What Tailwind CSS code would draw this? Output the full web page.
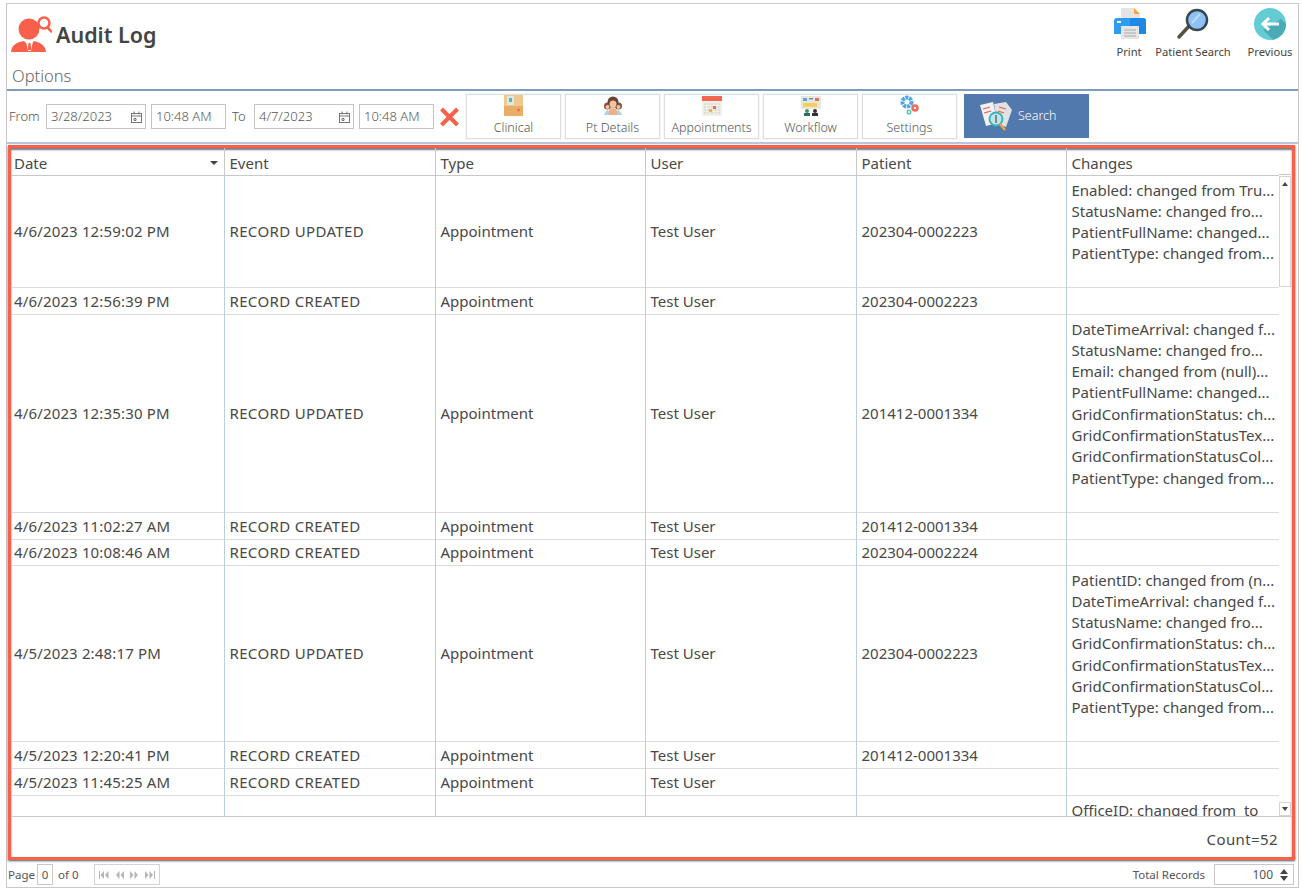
<!DOCTYPE html>
<html lang="en">
  <head>
    <meta charset="UTF-8" />
    <script src="https://cdn.jsdelivr.net/npm/@tailwindcss/browser@4"></script>
    <title>Audit Log</title>
  </head>
  <body class="bg-white font-['Noto_Sans',sans-serif] text-[#484848] overflow-hidden">
    <div class="h-[891px] w-[1302px] pt-[3px] pr-[3px] pb-[3px] pl-[6px]">
      <div class="h-[885px] border border-[#c8c8c8] flex flex-col">
        <!-- HEADER -->
        <div class="h-[85px] shrink-0 flex justify-between">
          <div class="pl-[4px] pt-[11px]">
            <div class="flex items-center gap-[4px] h-[38px]">
              <svg class="w-[41px] h-[37px]" viewBox="0 0 41 37">
                <path d="M0 36c1-7 4-9 13-11l3 3 2-1 2 1 3-3c7 2 11 4 12 11z" fill="#f9604c"/>
                <path d="M15 25h7l-2 10h-3z" fill="#fff"/><path d="M17.500 27h2l.8 7h-3.600z" fill="#f9604c"/>
                <circle cx="18" cy="13" r="10.500" fill="#f9604c"/>
                <circle cx="33" cy="7" r="5.500" fill="#fff" stroke="#f9604c" stroke-width="2.500"/>
                <path d="M36.500 11.500l4 4" stroke="#f9604c" stroke-width="2.500" stroke-linecap="round"/>
              </svg>
              <h1 class="text-[21.500px] leading-none font-semibold text-[#444] mt-[2px]">Audit Log</h1>
            </div>
            <p class="text-[16.500px] leading-none font-light text-[#666] mt-[15px] ml-px">Options</p>
          </div>
          <div class="flex text-[11.200px] text-[#444]">
            <div class="flex flex-col items-center w-[32px] mr-[7px] pt-[4px]">
              <svg class="w-[34px] h-[31px] shrink-0 ml-px" viewBox="0 0 34 31">
                <path d="M8 0h13l6 6v9H8z" fill="#e4e4e4"/><path d="M21 0l6 6h-6z" fill="#f9a33a"/>
                <path d="M1 13q0-3 3-3h26q3 0 3 3v13H1z" fill="#2f9cf0"/><path d="M17 10h13q3 0 3 3v13H17z" fill="#1e88e5"/>
                <rect x="4" y="13" width="4" height="2" fill="#fff"/>
                <rect x="8" y="18" width="18" height="13" fill="#e6e6e6"/>
                <path d="M11 22h12M11 25h12M11 28h12" stroke="#aaa" stroke-width="1.200"/>
              </svg>
              <span class="mt-[5px] whitespace-nowrap leading-[16px]">Print</span>
            </div>
            <div class="flex flex-col items-center w-[82px] mr-[14px] pt-[4px]">
              <svg class="w-[34px] h-[32px] shrink-0" viewBox="0 0 34 32">
                <path d="M3 29l11-12" stroke="#5a5040" stroke-width="3.500" stroke-linecap="round"/>
                <circle cx="21" cy="12" r="10" fill="#8fc1f7" stroke="#37474f" stroke-width="2.500"/>
                <path d="M16 15l8-9" stroke="#bcdcfb" stroke-width="2"/>
              </svg>
              <span class="mt-[4px] whitespace-nowrap leading-[16px]">Patient Search</span>
            </div>
            <div class="flex flex-col items-center w-[44px] mr-[6px] pt-[4px]">
              <svg class="w-[32px] h-[32px] shrink-0" viewBox="0 0 32 32">
                <circle cx="16" cy="16" r="16" fill="#63cdd3"/>
                <path d="M9 22l10 9.700a16 16 0 0 0 13-15.700l-5-5z" fill="#4bacb8"/>
                <path d="M25 16H9m6-6l-6 6 6 6" fill="none" stroke="#fff" stroke-width="3"/>
              </svg>
              <span class="mt-[4px] whitespace-nowrap leading-[16px]">Previous</span>
            </div>
          </div>
        </div>
        <!-- TOOLBAR -->
        <div class="h-[55px] shrink-0 border-t-2 border-t-[#7f9cc0] border-b-2 border-b-[#b5c7dc] flex items-start pt-[3px] text-[13px] text-[#555]">
          <div class="flex items-center h-[25px] mt-[10px] ml-[2px] font-light">
            <span class="w-[37px] pt-px">From</span>
            <div class="w-[100px] h-[25px] border border-[#c4c4c4] flex items-center justify-between pl-[4px] pr-[2px] pt-px">3/28/2023
              <svg class="w-[13px] h-[13px]" viewBox="0 0 13 13" fill="none" stroke="#777"><rect x="1.500" y="2.500" width="10" height="9"/><path d="M1.500 5h10M4 .5v3M9 .5v3M4 7.500h2v2H4z"/></svg>
            </div>
            <div class="w-[75px] h-[25px] border border-[#c4c4c4] flex items-center pl-[4px] ml-[5px] pt-px">10:48 AM</div>
            <span class="w-[28px] pl-[6px] pt-px">To</span>
            <div class="w-[100px] h-[25px] border border-[#c4c4c4] flex items-center justify-between pl-[4px] pr-[2px] pt-px">4/7/2023
              <svg class="w-[13px] h-[13px]" viewBox="0 0 13 13" fill="none" stroke="#777"><rect x="1.500" y="2.500" width="10" height="9"/><path d="M1.500 5h10M4 .5v3M9 .5v3M4 7.500h2v2H4z"/></svg>
            </div>
            <div class="w-[75px] h-[25px] border border-[#c4c4c4] flex items-center pl-[4px] ml-[5px] pt-px">10:48 AM</div>
            <svg class="w-[21px] h-[20px] ml-[5px]" viewBox="0 0 21 20"><path d="M2.500 2l16 16M18.500 2l-16 16" stroke="#f9604c" stroke-width="4"/></svg>
          </div>
          <div class="flex gap-[4px] ml-[6px] text-[12.500px] font-light">
            <div class="w-[95px] h-[45px] border border-[#ddd] shadow-[0_0_1px_#ccc] flex flex-col items-center">
              <svg class="w-[19px] h-[21px] shrink-0" viewBox="0 0 19 21"><rect width="19" height="21" fill="#eec88e"/><rect y="11" width="19" height="10" fill="#e9ae65"/><rect x="3" y="1" width="7" height="9" fill="#d7ece6"/><rect x="5" y="3" width="3" height="4" fill="#5fb6a4"/><path d="M13 15h3M14.500 13.500v3" stroke="#f9604c" stroke-width="1.200"/></svg>
              <span class="leading-[17px] mt-[3px]">Clinical</span>
            </div>
            <div class="w-[95px] h-[45px] border border-[#ddd] shadow-[0_0_1px_#ccc] flex flex-col items-center">
              <svg class="w-[20px] h-[21px] shrink-0" viewBox="0 0 20 21"><circle cx="4.500" cy="11" r="3.500" fill="#7d5040"/><circle cx="15.500" cy="11" r="3.500" fill="#7d5040"/><circle cx="10" cy="7" r="5.500" fill="#6d4434"/><circle cx="10" cy="9" r="3.500" fill="#f3c39d"/><circle cx="4.500" cy="12" r="2" fill="#f3c39d"/><circle cx="15.500" cy="12" r="2" fill="#f3c39d"/><path d="M4 20q1-6 6-7 5 1 6 7z" fill="#e9b08a"/><path d="M1 20q1-4 4-5l1 5zM19 20q-1-4-4-5l-1 5z" fill="#a9d6e5"/></svg>
              <span class="leading-[17px] mt-[3px]">Pt Details</span>
            </div>
            <div class="w-[95px] h-[45px] border border-[#ddd] shadow-[0_0_1px_#ccc] flex flex-col items-center">
              <svg class="w-[20px] h-[21px] shrink-0" viewBox="0 0 20 21"><rect y="1" width="20" height="20" fill="#f2efe8"/><rect y="1" width="20" height="5" fill="#f0684f"/><path d="M2 9h16M2 12h16M2 15h16M2 18h16" stroke="#d9d6cf" stroke-width="1.500" stroke-dasharray="2 1.500"/><rect x="11" y="11" width="3" height="3" fill="#f0684f"/><rect x="7" y="14" width="3" height="3" fill="#f5b04c"/></svg>
              <span class="leading-[17px] mt-[3px]">Appointments</span>
            </div>
            <div class="w-[95px] h-[45px] border border-[#ddd] shadow-[0_0_1px_#ccc] flex flex-col items-center">
              <svg class="w-[20px] h-[21px] shrink-0" viewBox="0 0 20 21"><rect y="1" width="20" height="13" fill="#e8e6e2"/><rect x="2" y="3" width="4" height="3" fill="#5aa9d6"/><rect x="8" y="3" width="4" height="1.500" fill="#888"/><rect x="14" y="3" width="4" height="3" fill="#e8705a"/><rect x="2" y="8" width="14" height="4" fill="#f5cf5a"/><circle cx="6" cy="16" r="2" fill="#3f8f7a"/><circle cx="14" cy="16" r="2" fill="#333"/><rect x="3" y="18" width="6" height="3" fill="#2d6d60"/><rect x="11" y="18" width="6" height="3" fill="#333"/></svg>
              <span class="leading-[17px] mt-[3px]">Workflow</span>
            </div>
            <div class="w-[95px] h-[45px] border border-[#ddd] shadow-[0_0_1px_#ccc] flex flex-col items-center">
              <svg class="w-[20px] h-[21px] shrink-0" viewBox="0 0 20 21" fill="none"><circle cx="7" cy="7" r="4.500" stroke="#4aa6e8" stroke-width="4" stroke-dasharray="3 .8"/><circle cx="15" cy="13" r="2.500" stroke="#ef6a5a" stroke-width="2.500"/><circle cx="9" cy="17" r="1.800" stroke="#5cc4bd" stroke-width="1.500"/></svg>
              <span class="leading-[17px] mt-[3px]">Settings</span>
            </div>
            <div class="w-[125px] h-[44px] bg-[#5179ae] ml-[3px] flex items-center text-white pl-[15px] gap-[5px]">
              <svg class="w-[34px] h-[32px] shrink-0" viewBox="0 0 34 32"><path d="M1 5l13-3 5 21-12 3z" fill="#f2f2f2"/><path d="M15 4l12-2 6 8-6 17-8-3z" fill="#e2e2e2"/><path d="M4 9l7-2M5 13l7-2M20 7l7 2M19 11l6 2" stroke="#e8604c" stroke-width="1.200"/><circle cx="17" cy="19" r="6.500" fill="#bfe6ea" stroke="#3fb3b8" stroke-width="2"/><path d="M21 24l5 6" stroke="#f5a03c" stroke-width="2.500"/><path d="M17 15v8" stroke="#333"/></svg>
              <span>Search</span>
            </div>
          </div>
        </div>
        <!-- GRID -->
        <div class="h-[715px] shrink-0 mt-px ml-px mr-[3px] border-[3px] border-[#f9604c] shadow-[0_1px_2px_#555,inset_0_2px_2px_#777] flex flex-col text-[15px] overflow-hidden">
          <div class="flex flex-1 min-h-0">
            <div class="w-[1268px] shrink-0 overflow-hidden h-[668px]">
              <table class="w-[1268px] table-fixed border-collapse">
                <colgroup><col class="w-[213px]"/><col class="w-[211px]"/><col class="w-[210px]"/><col class="w-[211px]"/><col class="w-[210px]"/><col class="w-[213px]"/></colgroup>
                <thead>
                  <tr class="h-[27px] text-left border-b border-[#c8c8c8]">
                    <th class="font-normal pl-[3px] pt-[4px] leading-[20px] border-r border-[#c8c8c8]"><div class="flex items-center justify-between pr-[6px]">Date<span class="w-0 h-0 border-x-4 border-x-transparent border-t-4 border-t-[#444]"></span></div></th>
                    <th class="font-normal pl-[5px] pt-[4px] leading-[20px] border-r border-[#c8c8c8]">Event</th>
                    <th class="font-normal pl-[5px] pt-[4px] leading-[20px] border-r border-[#c8c8c8]">Type</th>
                    <th class="font-normal pl-[5px] pt-[4px] leading-[20px] border-r border-[#c8c8c8]">User</th>
                    <th class="font-normal pl-[5px] pt-[4px] leading-[20px] border-r border-[#c8c8c8]">Patient</th>
                    <th class="font-normal pl-[5px] pt-[4px] leading-[20px] border-r border-[#c8c8c8]">Changes</th>
                  </tr>
                </thead>
                <tbody id="log-body"></tbody>
              </table>
            </div>
            <!-- scrollbar -->
            <div class="w-[12px] shrink-0 flex flex-col">
              <div class="h-[27px] border-b border-[#c8c8c8]"></div>
              <div class="h-[111px] mt-px border border-[#d4d4d4] flex justify-center pt-[5px]">
                <span class="w-0 h-0 border-x-[3.500px] border-x-transparent border-b-4 border-b-[#444]"></span>
              </div>
              <div class="flex-1"></div>
              <div class="h-[14px] border border-[#d4d4d4] flex justify-center items-center">
                <span class="w-0 h-0 border-x-[3.500px] border-x-transparent border-t-4 border-t-[#444]"></span>
              </div>
            </div>
          </div>
          <div class="h-[41px] shrink-0 border-t border-[#c8c8c8] text-right pr-[14px] pt-[12px] leading-[20px] tracking-[0.4px]">Count=52</div>
        </div>
        <!-- FOOTER -->
        <div class="flex-1 mt-[2px] flex items-center justify-between text-[11.500px] text-[#555]">
          <div class="flex items-center h-full">
            <span class="ml-px w-[29px]">Page</span>
            <div class="w-[16px] h-[21px] border border-[#c8c8c8] flex items-center justify-center">0</div>
            <span class="ml-[5px] w-[36px]">of 0</span>
            <div class="w-[66px] h-[21px] border border-[#d4d4d4] flex items-center justify-between px-[4px]">
              <svg class="w-[10px] h-[8px]" viewBox="0 0 10 8" fill="#b5b5b5"><path d="M0 0h1v8H0zM5 0v8L1.500 4zM9.500 0v8L6 4z"/></svg>
              <svg class="w-[9px] h-[8px]" viewBox="0 0 9 8" fill="#b5b5b5"><path d="M4.500 0v8L1 4zM9 0v8L5.500 4z"/></svg>
              <svg class="w-[9px] h-[8px]" viewBox="0 0 9 8" fill="#b5b5b5"><path d="M0 0v8l3.500-4zM4.500 0v8L8 4z"/></svg>
              <svg class="w-[10px] h-[8px]" viewBox="0 0 10 8" fill="#b5b5b5"><path d="M0 0v8l3.500-4zM4.500 0v8L8 4zM9 0h1v8H9z"/></svg>
            </div>
          </div>
          <div class="flex items-center h-full mr-[4px]">
            <span class="mr-[9px]">Total Records</span>
            <div class="w-[80px] h-[21px] border border-[#c8c8c8] flex items-center justify-end pr-[5px] gap-[7px] text-[12px]">100
              <span class="flex flex-col gap-[2px]"><span class="block w-0 h-0 border-x-4 border-x-transparent border-b-[5px] border-b-[#444]"></span><span class="block w-0 h-0 border-x-4 border-x-transparent border-t-[5px] border-t-[#444]"></span></span>
            </div>
          </div>
        </div>
      </div>
    </div>

    <script>
      const logs = [
        { h: 'h-[112px]', d: '4/6/2023 12:59:02 PM', e: 'RECORD UPDATED', p: '202304-0002223', c: ['Enabled: changed from Tru...', 'StatusName: changed fro...', 'PatientFullName: changed...', 'PatientType: changed from...'] },
        { h: 'h-[27px]', d: '4/6/2023 12:56:39 PM', e: 'RECORD CREATED', p: '202304-0002223', c: [] },
        { h: 'h-[198px]', d: '4/6/2023 12:35:30 PM', e: 'RECORD UPDATED', p: '201412-0001334', c: ['DateTimeArrival: changed f...', 'StatusName: changed fro...', 'Email: changed from (null)...', 'PatientFullName: changed...', 'GridConfirmationStatus: ch...', 'GridConfirmationStatusTex...', 'GridConfirmationStatusCol...', 'PatientType: changed from...'] },
        { h: 'h-[27px]', d: '4/6/2023 11:02:27 AM', e: 'RECORD CREATED', p: '201412-0001334', c: [] },
        { h: 'h-[26px]', d: '4/6/2023 10:08:46 AM', e: 'RECORD CREATED', p: '202304-0002224', c: [] },
        { h: 'h-[176px]', d: '4/5/2023 2:48:17 PM', e: 'RECORD UPDATED', p: '202304-0002223', c: ['PatientID: changed from (n...', 'DateTimeArrival: changed f...', 'StatusName: changed fro...', 'GridConfirmationStatus: ch...', 'GridConfirmationStatusTex...', 'GridConfirmationStatusCol...', 'PatientType: changed from...'] },
        { h: 'h-[27px]', d: '4/5/2023 12:20:41 PM', e: 'RECORD CREATED', p: '201412-0001334', c: [] },
        { h: 'h-[27px]', d: '4/5/2023 11:45:25 AM', e: 'RECORD CREATED', p: '', c: [] },
        { h: 'h-[176px]', d: '', e: '', p: '', c: ['OfficeID: changed from  to'] },
      ];
      const body = document.getElementById('log-body');
      logs.forEach((item) => {
        const row = document.createElement('tr');
        row.className = item.h + ' border-b border-[#dcdcdc]';
        row.innerHTML = `
          <td class="pl-[3px] leading-[20px] tracking-[0.15px] border-r border-[#b9cde3] whitespace-nowrap">${item.d}</td>
          <td class="pl-[5px] leading-[20px] tracking-[0.35px] border-r border-[#b9cde3] whitespace-nowrap">${item.e}</td>
          <td class="pl-[5px] leading-[20px] border-r border-[#b9cde3] whitespace-nowrap">${item.d ? 'Appointment' : ''}</td>
          <td class="pl-[5px] leading-[20px] border-r border-[#b9cde3] whitespace-nowrap">${item.d ? 'Test User' : ''}</td>
          <td class="pl-[5px] leading-[20px] border-r border-[#b9cde3] whitespace-nowrap">${item.p}</td>
          <td class="pl-[5px] align-top pt-[4px] leading-[21.300px] whitespace-pre">${item.c.join('\n')}</td>
        `;
        body.appendChild(row);
      });
    </script>
  </body>
</html>
